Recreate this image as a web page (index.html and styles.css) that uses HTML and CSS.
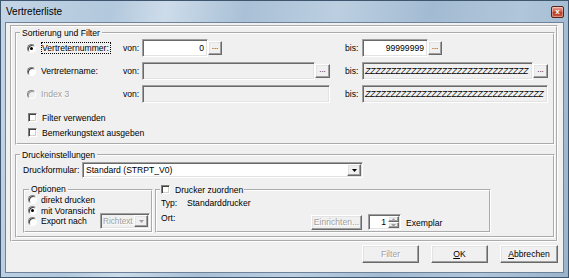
FILE: index.html
```html
<!DOCTYPE html>
<html lang="de">
<head>
    <meta charset="UTF-8">
    <meta name="viewport" content="width=device-width, initial-scale=1.0">
    <title>Vertreterliste</title>
    <link rel="stylesheet" href="styles.css">
</head>
<body>

<div class="window">

    <!-- Titelleiste -->
    <div class="titlebar">
        <span class="title">Vertreterliste</span>
        <span class="close">x</span>
    </div>

    <div class="client">
        <div class="panel">

            <!-- Sortierung und Filter -->
            <fieldset class="group sort">
                <legend>Sortierung und Filter</legend>

                <div class="row first">
                    <span class="radio checked"></span>
                    <span class="key"><span class="focus">Vertreternummer:</span></span>
                    <span class="von">von:</span>
                    <span class="field von-field">
                        <span class="edit short num">0</span><span class="btn dots">...</span>
                    </span>
                    <span class="bis">bis:</span>
                    <span class="field bis-field">
                        <span class="edit short num">99999999</span><span class="btn dots">...</span>
                    </span>
                </div>

                <div class="row">
                    <span class="radio"></span>
                    <span class="key">Vertretername:</span>
                    <span class="von">von:</span>
                    <span class="field von-field">
                        <span class="edit fill off"></span><span class="btn dots wide">...</span>
                    </span>
                    <span class="bis">bis:</span>
                    <span class="field bis-field">
                        <span class="edit fill off zz">ZZZZZZZZZZZZZZZZZZZZZZZZZZZZZZZZ</span><span class="btn dots wide">...</span>
                    </span>
                </div>

                <div class="row">
                    <span class="radio off"></span>
                    <span class="key disabled">Index 3</span>
                    <span class="von">von:</span>
                    <span class="field von-field">
                        <span class="edit fill off"></span>
                    </span>
                    <span class="bis">bis:</span>
                    <span class="field bis-field">
                        <span class="edit fill off zz">ZZZZZZZZZZZZZZZZZZZZZZZZZZZZZZZZZZZ</span>
                    </span>
                </div>

                <div class="check-row first"><span class="check"></span>Filter verwenden</div>
                <div class="check-row"><span class="check"></span>Bemerkungstext ausgeben</div>
            </fieldset>

            <!-- Druckeinstellungen -->
            <fieldset class="group print">
                <legend>Druckeinstellungen</legend>

                <div class="form-row">
                    <span class="form-label">Druckformular:</span>
                    <span class="combo form-combo">
                        <span class="combo-text">Standard (STRPT_V0)</span>
                        <span class="btn drop"><svg width="5" height="3" viewBox="0 0 5 3"><path d="M0 0h5L2.5 3z" fill="#000"/></svg></span>
                    </span>
                </div>

                <div class="sub-row">
                    <fieldset class="group options">
                        <legend>Optionen</legend>
                        <div class="opt"><span class="radio"></span>direkt drucken</div>
                        <div class="opt"><span class="radio checked"></span>mit Voransicht</div>
                        <div class="opt export">
                            <span class="radio"></span>
                            <span class="export-label">Export nach</span>
                            <span class="combo off richtext">
                                <span class="combo-text disabled">Richtext</span>
                                <span class="btn drop"><svg width="5" height="3" viewBox="0 0 5 3"><path d="M0 0h5L2.5 3z" fill="#a0a0a0"/></svg></span>
                            </span>
                        </div>
                    </fieldset>

                    <fieldset class="group printer">
                        <legend><span class="check"></span>Drucker zuordnen</legend>
                        <div class="info typ"><span class="info-key">Typ:</span>Standarddrucker</div>
                        <div class="info ort">
                            <span class="ort-key">Ort:</span>
                            <span class="btn setup disabled">Einrichten...</span>
                            <span class="spin">
                                <span class="spin-val">1</span>
                                <span class="spin-btns">
                                    <span class="btn arrow"><svg width="5" height="3" viewBox="0 0 5 3"><path d="M0 3h5L2.5 0z" fill="#a0a0a0"/></svg></span>
                                    <span class="btn arrow"><svg width="5" height="3" viewBox="0 0 5 3"><path d="M0 0h5L2.5 3z" fill="#a0a0a0"/></svg></span>
                                </span>
                            </span>
                            <span class="copies">Exemplar</span>
                        </div>
                    </fieldset>
                </div>
            </fieldset>

        </div>

        <!-- Dialogknöpfe -->
        <div class="buttons">
            <span class="btn push disabled">Filter</span>
            <span class="btn push"><u>O</u>K</span>
            <span class="btn push cancel"><u>A</u>bbrechen</span>
        </div>
    </div>

</div>

</body>
</html>
```

FILE: styles.css
```css
/* Grundlayout */
* {
    box-sizing: border-box;
}
body {
    margin: 0;
    font-family: "Liberation Sans", Arial, sans-serif;
    font-size: 8.6px;
    color: #000;
}
.window {
    width: 569px;
    height: 278px;
    display: flex;
    flex-direction: column;
    padding: 0 4px 4px;
    border: 1px solid #3e566e;
    background: linear-gradient(100deg, #c4d5e6 0%, #b2c8dc 18%, #cddcea 27%, #a9c0d6 40%, #bccfe1 55%, #a3bbd2 70%, #b0c6da 85%, #9ab4cc 100%);
}

/* Titelleiste */
.titlebar {
    height: 21px;
    display: flex;
    align-items: center;
    justify-content: space-between;
    padding-left: 1px;
}
.title {
    font-size: 10px;
}
.close {
    width: 13px;
    height: 12px;
    border: 1px solid #5a2218;
    border-radius: 2px;
    background: linear-gradient(#e8a898, #d0604c 45%, #b83c28 55%, #c85a40);
    box-shadow: inset 0 0 0 1px rgba(255, 255, 255, .35);
    color: #fff;
    font-size: 8px;
    font-weight: bold;
    line-height: 9px;
    text-align: center;
}

/* Fensterinhalt */
.client {
    flex: 1;
    background: #f0f0f0;
    border: 1px solid #6e8399;
    padding: 2px 5px 0 4px;
}
.panel {
    border: 2px groove #fff;
    padding: 1px 1px 2px 3px;
}
.group {
    margin: 0;
    padding: 0;
    min-width: 0;
    border: 2px groove #fff;
}
.group legend {
    padding: 0 2px;
    margin-left: 3px;
    line-height: 10px;
}
.disabled {
    color: #a0a0a0;
    text-shadow: 1px 1px 0 #fff;
}

/* Steuerelemente */
.radio {
    position: relative;
    flex: none;
    width: 9px;
    height: 9px;
    margin-right: 5px;
    border-radius: 50%;
    background: #fff;
    border: 1px solid;
    border-color: #808080 #fff #fff #808080;
    box-shadow: inset 1px 1px 0 #404040;
}
.radio.checked::after {
    content: "";
    position: absolute;
    left: 2px;
    top: 2px;
    width: 3px;
    height: 3px;
    border-radius: 50%;
    background: #000;
}
.radio.off {
    background: #f0f0f0;
    box-shadow: inset 1px 1px 0 #a0a0a0;
}
.check {
    display: inline-block;
    flex: none;
    width: 9px;
    height: 9px;
    margin-right: 5px;
    background: #fff;
    border: 1px solid;
    border-color: #808080 #fff #fff #808080;
    box-shadow: inset 1px 1px 0 #404040, inset -1px -1px 0 #d4d0c8;
}
.edit,
.combo,
.spin {
    background: #fff;
    border: 1px solid;
    border-color: #a0a0a0 #fff #fff #a0a0a0;
    box-shadow: inset 1px 1px 0 #696969, inset -1px -1px 0 #e3e3e3;
}
.edit {
    height: 18px;
    padding: 0 3px;
    line-height: 16px;
    white-space: nowrap;
    overflow: hidden;
}
.edit.short {
    width: 66px;
}
.edit.fill {
    flex: 1;
}
.edit.num {
    text-align: right;
}
.off {
    background: #f0f0f0;
}
.zz {
    padding: 0 0 0 2px;
    font-style: italic;
    font-size: 9px;
    letter-spacing: -0.4px;
}
.btn {
    background: #f0f0f0;
    border: 1px solid;
    border-color: #fff #696969 #696969 #fff;
    box-shadow: inset -1px -1px 0 #a0a0a0, inset 1px 1px 0 #e3e3e3;
    text-align: center;
}
.dots {
    flex: none;
    width: 14px;
    height: 14px;
    font-size: 8px;
    line-height: 10px;
}
.dots.wide {
    width: 15px;
}

/* Sortierung und Filter */
.row {
    display: flex;
    align-items: center;
    height: 18px;
    margin-top: 5px;
    padding-left: 10px;
}
.row.first {
    margin-top: 1px;
}
.key {
    width: 82px;
}
.focus {
    border: 1px dotted #000;
    padding: 0 1px 0 0;
    line-height: 10px;
}
.von {
    width: 19px;
}
.bis {
    width: 17px;
    margin-left: 15px;
}
.field {
    display: flex;
    align-items: center;
    height: 18px;
}
.von-field {
    width: 188px;
}
.bis-field {
    width: 186px;
}
.check-row {
    display: flex;
    align-items: center;
    height: 15px;
    padding-left: 11px;
}
.check-row.first {
    margin-top: 7px;
}
.sort {
    padding-bottom: 3px;
}

/* Druckeinstellungen */
.print {
    margin-top: 5px;
    padding-bottom: 3px;
}
.form-row {
    display: flex;
    align-items: center;
    height: 16px;
    margin-top: 2px;
    padding-left: 6px;
}
.form-label {
    width: 59px;
}
.combo {
    display: flex;
    align-items: center;
    height: 16px;
    padding: 0 1px 0 3px;
}
.combo.off {
    background: #f0f0f0;
}
.form-combo {
    width: 281px;
}
.combo-text {
    flex: 1;
    white-space: nowrap;
    overflow: hidden;
}
.drop {
    display: flex;
    align-items: center;
    justify-content: center;
    flex: none;
    width: 14px;
    height: 12px;
}
.sub-row {
    display: flex;
    margin-top: 7px;
    padding-left: 6px;
}
.options {
    width: 130px;
    padding-bottom: 1px;
}
.options legend,
.printer legend {
    margin-left: 4px;
    line-height: 9px;
}
.opt {
    display: flex;
    align-items: center;
    height: 11px;
    padding-left: 3px;
}
.opt .radio {
    margin-right: 4px;
}
.opt.export {
    height: 16px;
    margin-top: -3px;
}
.export-label {
    width: 59px;
}
.richtext {
    width: 50px;
    padding-left: 2px;
}
.richtext .combo-text {
    font-size: 8.2px;
    overflow: visible;
}
.printer {
    width: 336px;
    margin-left: 2px;
    padding-bottom: 1px;
}
.printer legend {
    margin-left: 3px;
    padding: 0 1px;
}
.printer legend .check {
    vertical-align: -1px;
}
.info {
    display: flex;
    padding-left: 4px;
}
.typ {
    align-items: center;
    height: 12px;
    margin-top: 2px;
}
.info-key {
    width: 26px;
}
.ort {
    align-items: flex-end;
    height: 18px;
    margin-top: 3px;
}
.ort-key {
    align-self: flex-start;
    width: 150px;
    line-height: 12px;
}
.setup {
    width: 51px;
    height: 15px;
    line-height: 13px;
}
.spin {
    display: flex;
    align-items: center;
    width: 33px;
    height: 16px;
    margin-left: 6px;
    padding: 0 1px 0 2px;
}
.spin-val {
    flex: 1;
    padding-right: 2px;
    text-align: right;
}
.spin-btns {
    display: flex;
    flex-direction: column;
}
.arrow {
    display: flex;
    align-items: center;
    justify-content: center;
    width: 11px;
    height: 6px;
}
.copies {
    align-self: center;
    margin-left: 5px;
    margin-top: 3px;
}

/* Dialogknöpfe */
.buttons {
    display: flex;
    justify-content: flex-end;
    gap: 12px;
    margin-top: 3px;
}
.push {
    width: 57px;
    height: 18px;
    line-height: 16px;
}
.push.cancel {
    width: 58px;
}
```
